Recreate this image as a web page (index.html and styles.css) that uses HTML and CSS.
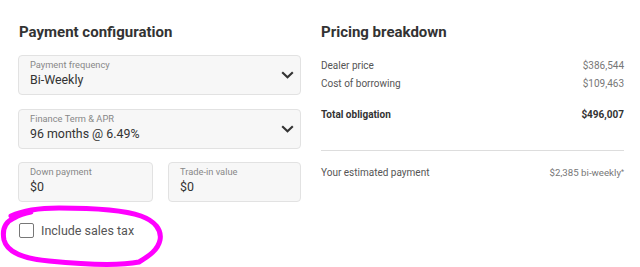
FILE: index.html
```html
<!DOCTYPE html>
<html>
<head>
<meta charset="utf-8">
<link rel="stylesheet" href="styles.css">
</head>
<body>
<div class="page">
  <section class="config">
    <h2 class="title">Payment configuration</h2>
    <div class="field select">
      <div class="field-body">
        <span class="label">Payment frequency</span>
        <span class="value">Bi-Weekly</span>
      </div>
      <svg class="chev" width="13" height="8" viewBox="0 0 13 8"><path d="M1.2 1.2 L6.5 6.3 L11.8 1.2" fill="none" stroke="#333" stroke-width="2.1"/></svg>
    </div>
    <div class="field select">
      <div class="field-body">
        <span class="label">Finance Term &amp; APR</span>
        <span class="value">96 months @ 6.49%</span>
      </div>
      <svg class="chev" width="13" height="8" viewBox="0 0 13 8"><path d="M1.2 1.2 L6.5 6.3 L11.8 1.2" fill="none" stroke="#333" stroke-width="2.1"/></svg>
    </div>
    <div class="pair">
      <div class="field">
        <div class="field-body">
          <span class="label">Down payment</span>
          <span class="value">$0</span>
        </div>
      </div>
      <div class="field">
        <div class="field-body">
          <span class="label">Trade-in value</span>
          <span class="value">$0</span>
        </div>
      </div>
    </div>
    <label class="check">
      <span class="box"></span>
      <span class="check-text">Include sales tax</span>
      <svg class="scribble" width="170" height="70" viewBox="0 0 170 70"><path d="M12 16 C25 10 40 8 60 8 C90 8 125 10 142 16 C156 21 163 30 161 40 C159 50 150 56 140 62 C120 66 80 64 50 61 C25 59 8 52 5 40 C3 30 6 22 15 18 C20 15 26 13 32 12" fill="none" stroke="#f0f" stroke-width="5" stroke-linecap="round" stroke-linejoin="round"/></svg>
    </label>
  </section>
  <section class="pricing">
    <h2 class="title">Pricing breakdown</h2>
    <div class="rows">
      <div class="row"><span>Dealer price</span><span>$386,544</span></div>
      <div class="row"><span>Cost of borrowing</span><span>$109,463</span></div>
    </div>
    <div class="row total"><span>Total obligation</span><span>$496,007</span></div>
    <hr class="divider">
    <div class="row est"><span>Your estimated payment</span><span class="est-val">$2,385 bi-weekly<sup class="ast">*</sup></span></div>
  </section>
</div>
</body>
</html>
```
FILE: styles.css
```css
html, body { margin: 0; padding: 0; background: #fff; }
html { min-height: 267px; }
body { min-height: 267px; font-family: Roboto, "Liberation Sans", sans-serif; color: #333; }
.page { display: flex; gap: 20px; padding: 22px 16px 0 18px; }
.config { width: 283px; display: flex; flex-direction: column; }
.pricing { width: 303px; }
.title { margin: 0; font-size: 15px; line-height: 20px; font-weight: 700; color: #333; }
.config .title { padding-left: 1px; margin-bottom: 13px; }
.pricing .title { margin-bottom: 17px; }
.field { box-sizing: border-box; height: 40px; background: #f7f7f7; border: 1px solid #e2e2e2; border-radius: 4px; display: flex; align-items: center; padding: 0 6px 0 11px; }
.select { margin-bottom: 14px; }
.field-body { flex: 1; align-self: flex-start; display: flex; flex-direction: column; gap: 1px; padding-top: 3px; }
.label { font-size: 9.3px; line-height: 12px; color: #888; }
.value { font-size: 12.4px; line-height: 16px; color: #333; }
.pair { display: grid; grid-template-columns: 135px 133px; gap: 15px; margin-top: -1px; }
.check { position: relative; display: flex; align-items: center; gap: 7px; margin-top: 21px; padding-left: 1px; }
.box { box-sizing: border-box; width: 15px; height: 15px; border: 1.5px solid #777; border-radius: 2px; }
.check-text { font-size: 12.5px; line-height: 15px; color: #555; }
.scribble { position: absolute; left: -19px; top: -23px; }
.rows { display: flex; flex-direction: column; gap: 4px; }
.row { display: flex; justify-content: space-between; font-size: 10px; line-height: 14px; color: #555; }
.row span:last-child { color: #777; }
.total { margin-top: 17px; font-weight: 700; color: #333; }
.total span:last-child { color: #333; }
.divider { margin: 28px 0 0; border: 0; border-top: 1px solid #ddd; }
.est { margin-top: 15px; }
.row .est-val { color: #666; font-size: 9.7px; }
.ast { font-size: 7px; line-height: 0; vertical-align: 2px; }
```
